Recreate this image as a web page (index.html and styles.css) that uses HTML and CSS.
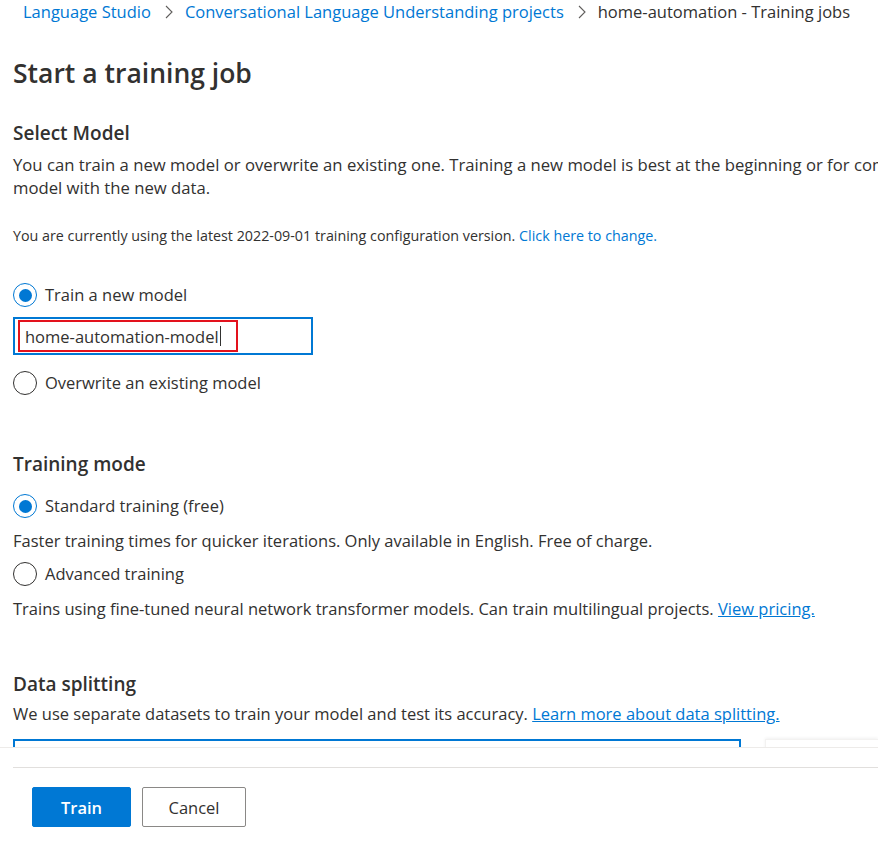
FILE: index.html
```html
<!DOCTYPE html>
<html lang="en">
<head>
<meta charset="utf-8">
<title>Start a training job</title>
<link rel="stylesheet" href="styles.css">
</head>
<body>
<div class="page">
  <div class="main">
    <nav class="crumbs">
      <a class="crumb-link" href="#">Language Studio</a>
      <span class="chev">
        <svg width="8" height="14" viewBox="0 0 8 14"><path d="M1 1 L7 7 L1 13" fill="none" stroke="#605e5c" stroke-width="1.1"/></svg>
      </span>
      <a class="crumb-link" href="#">Conversational Language Understanding projects</a>
      <span class="chev">
        <svg width="8" height="14" viewBox="0 0 8 14"><path d="M1 1 L7 7 L1 13" fill="none" stroke="#605e5c" stroke-width="1.1"/></svg>
      </span>
      <span class="crumb-current">home-automation - Training jobs</span>
    </nav>

    <h1 class="title">Start a training job</h1>

    <h2 class="section-title sel-title">Select Model</h2>
    <p class="desc nowrap">You can train a new model or overwrite an existing one. Training a new model is best at the beginning or for complete retraining. Overwriting updates an existing<br>model with the new data.</p>
    <p class="small">You are currently using the latest 2022-09-01 training configuration version. <a class="link-plain" href="#">Click here to change.</a></p>

    <div class="radio-row r-train">
      <span class="radio checked"></span><span class="radio-label">Train a new model</span>
    </div>
    <div class="input-box">
      <span class="input-text">home-automation-model</span><span class="caret"></span>
      <span class="highlight"></span>
    </div>
    <div class="radio-row r-over">
      <span class="radio"></span><span class="radio-label">Overwrite an existing model</span>
    </div>

    <h2 class="section-title mode-title">Training mode</h2>
    <div class="radio-row r-std">
      <span class="radio checked"></span><span class="radio-label">Standard training (free)</span>
    </div>
    <p class="body-text t-fast">Faster training times for quicker iterations. Only available in English. Free of charge.</p>
    <div class="radio-row r-adv">
      <span class="radio"></span><span class="radio-label">Advanced training</span>
    </div>
    <p class="body-text t-trains">Trains using fine-tuned neural network transformer models. Can train multilingual projects. <a class="link" href="#">View pricing.</a></p>

    <h2 class="section-title split-title">Data splitting</h2>
    <p class="desc split-desc">We use separate datasets to train your model and test its accuracy. <a class="link" href="#">Learn more about data splitting.</a></p>
    <div class="split-row">
      <div class="split-box"></div>
      <div class="split-card"></div>
    </div>
  </div>
  <footer class="footer">
    <div class="footer-inner">
      <button class="btn btn-primary" type="button">Train</button>
      <button class="btn btn-default" type="button">Cancel</button>
    </div>
  </footer>
</div>
</body>
</html>
```

FILE: styles.css
```css
html, body {
  margin: 0;
  padding: 0;
  background: #ffffff;
}
body {
  width: 878px;
  height: 846px;
  overflow: hidden;
  font-family: "Open Sans", "Noto Sans", "Liberation Sans", sans-serif;
  color: #323130;
}
.page {
  display: flex;
  flex-direction: column;
  height: 846px;
}
.main {
  flex: 0 0 748px;
  height: 748px;
  overflow: hidden;
  padding-left: 13px;
  box-sizing: border-box;
  border-bottom: 1px solid #edebe9;
}
.crumbs {
  display: flex;
  align-items: center;
  height: 23px;
  line-height: 23px;
  padding-left: 10px;
  font-size: 16.5px;
  white-space: nowrap;
}
.crumb-link {
  color: #0078d4;
  text-decoration: none;
}
.chev {
  display: inline-flex;
  align-items: center;
  margin: 0 12px 0 14px;
}
.crumb-current {
  color: #323130;
}
.title {
  margin: 34px 0 0;
  font-size: 26.5px;
  line-height: 32px;
  font-weight: 600;
}
.section-title {
  margin: 0;
  font-size: 19px;
  line-height: 28px;
  font-weight: 600;
}
.sel-title { margin-top: 30px; }
.desc {
  margin: 6px 0 0;
  font-size: 16.7px;
  line-height: 23px;
}
.nowrap { white-space: nowrap; }
.small {
  margin: 27px 0 0;
  font-size: 14.3px;
  line-height: 20px;
}
.link-plain {
  color: #0078d4;
  text-decoration: none;
}
.link {
  color: #0078d4;
  text-decoration: underline;
}
.radio-row {
  display: flex;
  align-items: center;
  height: 26px;
  gap: 8px;
}
.radio {
  width: 24px;
  height: 24px;
  box-sizing: border-box;
  border: 1px solid #323130;
  border-radius: 50%;
  display: inline-flex;
  align-items: center;
  justify-content: center;
  flex: 0 0 auto;
}
.radio.checked {
  border: 1.5px solid #0078d4;
}
.radio.checked::after {
  content: "";
  width: 13px;
  height: 13px;
  border-radius: 50%;
  background: #0078d4;
}
.radio-label {
  font-size: 16.5px;
  line-height: 26px;
}
.r-train { margin-top: 36px; }
.input-box {
  position: relative;
  margin-top: 9px;
  width: 300px;
  height: 38px;
  box-sizing: border-box;
  border: 2px solid #0078d4;
  display: flex;
  align-items: center;
  padding-left: 10px;
  font-size: 16.5px;
}
.caret {
  display: inline-block;
  width: 1px;
  height: 20px;
  background: #323130;
  margin-left: 1px;
}
.highlight {
  position: absolute;
  left: 3px;
  top: 1px;
  width: 220px;
  height: 32px;
  box-sizing: border-box;
  border: 2px solid #e3121d;
}
.r-over { margin-top: 15px; }
.mode-title { margin-top: 54px; }
.r-std { margin-top: 15px; }
.body-text {
  margin: 0;
  font-size: 16.5px;
  line-height: 24px;
}
.t-fast { margin-top: 10px; }
.r-adv { margin-top: 8px; }
.t-trains { margin-top: 10px; }
.split-title { margin-top: 49px; }
.split-desc { margin-top: 4px; font-size: 16.5px; }
.split-row {
  display: flex;
  margin-top: 14px;
  gap: 24px;
}
.split-box {
  width: 728px;
  height: 40px;
  box-sizing: border-box;
  border: 2px solid #0078d4;
  flex: 0 0 auto;
}
.split-card {
  flex: 1 1 auto;
  height: 40px;
  border-top: 1px solid #f3f2f1;
  border-left: 1px solid #f3f2f1;
  box-shadow: 0 -1px 3px rgba(0,0,0,0.06);
}
.footer {
  flex: 1 1 auto;
  padding-left: 13px;
  padding-top: 19px;
}
.footer-inner {
  border-top: 1px solid #e1dfdd;
  padding: 19px 0 0 19px;
  display: flex;
  gap: 11px;
}
.btn {
  height: 40px;
  border-radius: 2px;
  font-family: inherit;
  font-size: 16.5px;
  padding: 0;
  cursor: pointer;
}
.btn-primary {
  width: 99px;
  background: #0078d4;
  border: 1px solid #0078d4;
  color: #ffffff;
  font-weight: 600;
}
.btn-default {
  width: 104px;
  background: #ffffff;
  border: 1px solid #8a8886;
  color: #323130;
}
```
